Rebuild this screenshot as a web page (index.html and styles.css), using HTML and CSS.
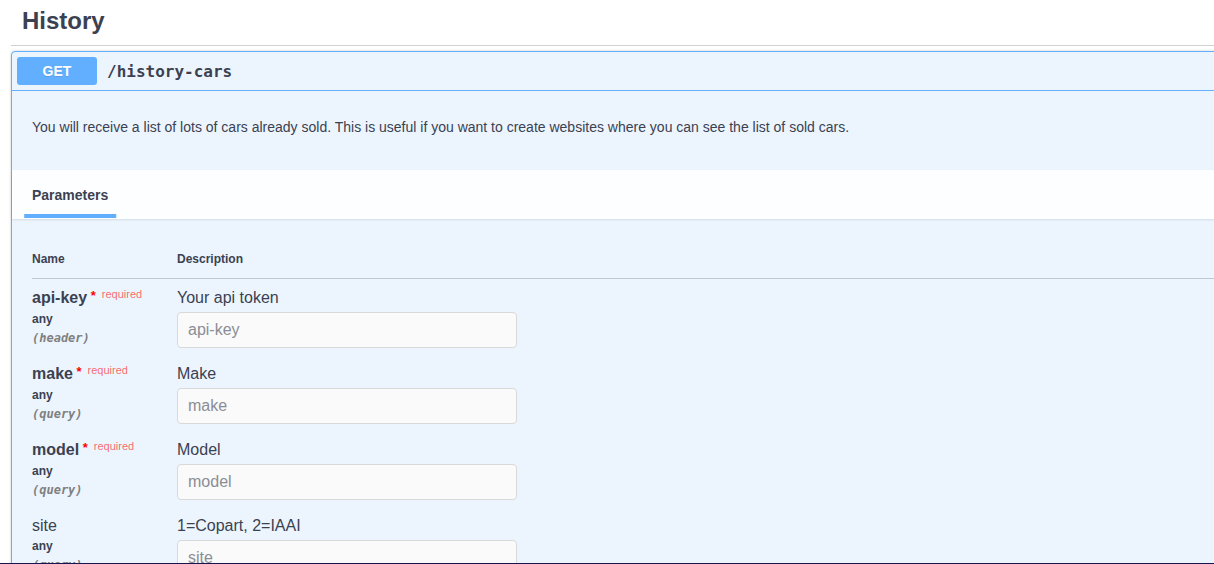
FILE: index.html
```html
<!DOCTYPE html>
<html>
<head>
<meta charset="utf-8">
<link rel="stylesheet" href="styles.css">
</head>
<body>
<div class="wrapper">
  <h3 class="tag">History</h3>
  <div class="opblock">
    <div class="summary">
      <span class="method">GET</span>
      <span class="path">/history-cars</span>
    </div>
    <div class="desc">
      <p>You will receive a list of lots of cars already sold. This is useful if you want to create websites where you can see the list of sold cars.</p>
    </div>
    <div class="section-header">
      <h4 class="tab"><span class="tab-label">Parameters</span></h4>
    </div>
    <div class="table">
      <div class="thead">
        <div class="col-name">Name</div>
        <div class="col-desc">Description</div>
      </div>
      <div class="row">
        <div class="col-name">
          <div class="pname req">api-key<span class="star">&nbsp;*</span><span class="required">required</span></div>
          <div class="ptype">any</div>
          <div class="pin">(header)</div>
        </div>
        <div class="col-desc">
          <div class="pdesc">Your api token</div>
          <input class="field" type="text" placeholder="api-key">
        </div>
      </div>
      <div class="row">
        <div class="col-name">
          <div class="pname req">make<span class="star">&nbsp;*</span><span class="required">required</span></div>
          <div class="ptype">any</div>
          <div class="pin">(query)</div>
        </div>
        <div class="col-desc">
          <div class="pdesc">Make</div>
          <input class="field" type="text" placeholder="make">
        </div>
      </div>
      <div class="row">
        <div class="col-name">
          <div class="pname req">model<span class="star">&nbsp;*</span><span class="required">required</span></div>
          <div class="ptype">any</div>
          <div class="pin">(query)</div>
        </div>
        <div class="col-desc">
          <div class="pdesc">Model</div>
          <input class="field" type="text" placeholder="model">
        </div>
      </div>
      <div class="row">
        <div class="col-name">
          <div class="pname">site</div>
          <div class="ptype">any</div>
          <div class="pin">(query)</div>
        </div>
        <div class="col-desc">
          <div class="pdesc">1=Copart, 2=IAAI</div>
          <input class="field" type="text" placeholder="site">
        </div>
      </div>
    </div>
  </div>
</div>
<div class="edge"></div>
</body>
</html>
```

FILE: styles.css
```css
html, body {
  margin: 0;
  padding: 0;
  background: #ffffff;
  overflow: hidden;
  height: 564px;
}
body {
  font-family: "Liberation Sans", Arial, sans-serif;
  color: #3b4151;
}
.wrapper {
  margin-left: 11px;
  width: 1260px;
}
.tag {
  margin: 0 0 5px 0;
  padding: 7px 0 10px 11px;
  font-size: 24px;
  line-height: 28px;
  font-weight: 700;
  color: #3b4151;
  border-bottom: 1px solid #cfd1d5;
}
.opblock {
  border: 1px solid #61affe;
  border-radius: 4px;
  background: #ecf5fe;
  box-shadow: 0 0 3px rgba(0,0,0,.19);
}
.summary {
  display: flex;
  align-items: center;
  padding: 5px;
  border-bottom: 1px solid #61affe;
}
.method {
  display: block;
  min-width: 80px;
  padding: 6px 0;
  line-height: 16px;
  text-align: center;
  font-size: 14px;
  font-weight: 700;
  color: #ffffff;
  background: #61affe;
  border-radius: 3px;
  text-shadow: 0 1px 0 rgba(0,0,0,.1);
}
.path {
  padding: 0 10px;
  font-family: "DejaVu Sans Mono", "Liberation Mono", monospace;
  font-size: 16px;
  font-weight: 700;
  color: #3b4151;
}
.desc {
  padding: 15px 20px;
  height: 49px;
}
.desc p {
  margin: 13px 0 0 0;
  font-size: 14px;
  line-height: 17px;
  color: #3b4151;
}
.section-header {
  height: 49px;
  padding: 0 20px;
  background: rgba(255,255,255,.85);
  box-shadow: 0 1px 2px rgba(0,0,0,.1);
  display: flex;
  align-items: flex-start;
}
.tab {
  margin: 17px 0 0 0;
  font-size: 14px;
  line-height: 17px;
  font-weight: 700;
  color: #3b4151;
}
.tab-label {
  position: relative;
}
.tab-label::after {
  content: "";
  position: absolute;
  left: 50%;
  transform: translateX(-50%);
  width: 120%;
  height: 4px;
  bottom: -15px;
  background: #61affe;
}
.table {
  padding: 21px 0 0 20px;
}
.thead {
  display: flex;
  font-size: 12px;
  line-height: 14px;
  font-weight: 700;
  padding: 12px 0;
  border-bottom: 1px solid rgba(59,65,81,.25);
}
.col-name {
  width: 145px;
  flex: none;
}
.col-desc {
  flex: 1;
}
.row {
  display: flex;
  padding: 10px 0 7px 0;
}
.pname {
  font-size: 16px;
  line-height: 18px;
  font-weight: 400;
  white-space: nowrap;
}
.pname.req {
  font-weight: 700;
}
.star {
  color: #ff0000;
  font-size: 13px;
  position: relative;
  top: -3px;
  font-weight: 700;
}
.required {
  color: rgba(255,0,0,.6);
  font-size: 11px;
  font-weight: 400;
  position: relative;
  top: -5px;
  padding: 0 0 0 6px;
}
.ptype {
  padding: 4px 0 0 0;
  font-size: 12px;
  line-height: 14px;
  font-weight: 700;
}
.pin {
  padding: 5px 0 0 0;
  font-size: 12px;
  line-height: 14px;
  font-family: "DejaVu Sans Mono", "Liberation Mono", monospace;
  font-style: italic;
  font-weight: 600;
  color: #808080;
}
.pdesc {
  font-size: 16px;
  line-height: 18px;
}
.field {
  display: block;
  box-sizing: border-box;
  width: 340px;
  height: 36px;
  margin: 5px 0 0 0;
  padding: 8px 10px;
  font-family: "Liberation Sans", Arial, sans-serif;
  font-size: 16px;
  color: #3b4151;
  background: #fafafa;
  border: 1px solid #d9d9d9;
  border-radius: 4px;
  outline: none;
}
.field::placeholder {
  color: #8a8d95;
}
.edge {
  position: fixed;
  left: 0;
  right: 0;
  bottom: 0;
  height: 1px;
  background: #1c124f;
}
```
